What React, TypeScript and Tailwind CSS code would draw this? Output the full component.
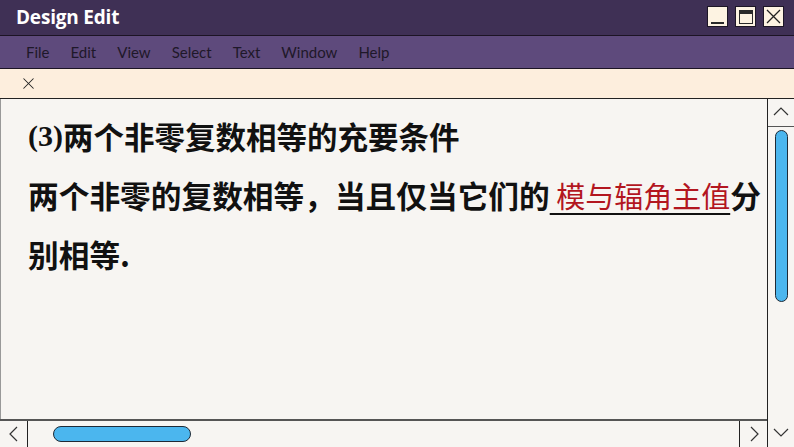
import { X } from "lucide-react";

const MENU = ["File", "Edit", "View", "Select", "Text", "Window", "Help"];

function WinButton({ kind }: { kind: "min" | "max" | "close" }) {
  return (
    <div className="w-[21px] h-[21px] bg-[#fdf3e2] border border-[#1d1626] flex items-center justify-center">
      {kind === "min" && <div className="w-[13px] h-[2px] bg-[#2a2a2a] mt-[12px]" />}
      {kind === "max" && (
        <div className="w-[14px] h-[14px] border border-[#2a2a2a] border-t-[4px]" />
      )}
      {kind === "close" && (
        <svg width="15" height="15" viewBox="0 0 15 15">
          <path d="M1 1L14 14M14 1L1 14" stroke="#222" strokeWidth="1.3" />
        </svg>
      )}
    </div>
  );
}

function Chevron({ dir }: { dir: "up" | "down" | "left" | "right" }) {
  const d = {
    up: "M2 11L9 4L16 11",
    down: "M2 5L9 12L16 5",
    left: "M12 2L5 9L12 16",
    right: "M6 2L13 9L6 16",
  }[dir];
  return (
    <svg width="18" height="18" viewBox="0 0 18 18">
      <path d={d} fill="none" stroke="#333" strokeWidth="1.2" />
    </svg>
  );
}

export default function App() {
  return (
    <div className="w-[794px] h-[447px] overflow-hidden flex flex-col bg-[#f7f5f2] font-['Lato',sans-serif]">
      {/* Title bar */}
      <div className="h-[36px] shrink-0 bg-[#3f3055] border-b border-[#1c1424] flex items-center justify-between pl-[16px] pr-[10px]">
        <span className="text-white font-bold text-[19px] font-['Open_Sans',sans-serif] tracking-[-0.2px]">
          Design Edit
        </span>
        <div className="flex items-center gap-[7px] mt-[-2px]">
          <WinButton kind="min" />
          <WinButton kind="max" />
          <WinButton kind="close" />
        </div>
      </div>

      {/* Menu bar */}
      <div className="h-[33px] shrink-0 bg-[#5e4a7c] border-b border-[#1c1424] flex items-center pl-[26px] gap-[21px] text-[15px] text-[#1e1829]">
        {MENU.map((m) => (
          <span key={m}>{m}</span>
        ))}
      </div>

      {/* Toolbar */}
      <div className="h-[30px] shrink-0 bg-[#fdeedd] border-b border-[#222] flex items-center pl-[19px]">
        <X size={19} strokeWidth={1.3} className="text-[#222]" />
      </div>

      {/* Body */}
      <div className="flex-1 flex min-h-0">
        <div className="flex-1 flex flex-col min-w-0">
          <div className="flex-1 border-l border-[#999] pl-[27px] pt-[17px] font-['Noto_Sans_CJK_SC',sans-serif] font-bold text-[#111]">
            <div className="h-[40px] flex items-center text-[30.5px] leading-none whitespace-nowrap">
              <span className="font-['Liberation_Serif',serif] text-[30px]">(3)</span>
              <span>两个非零复数相等的充要条件</span>
            </div>
            <div className="h-[60px] mt-[9px] flex items-center text-[30.7px] leading-none whitespace-nowrap">
              <span>两个非零的复数相等，当且仅当它们的</span>
              <span className="font-normal text-[#b3161f] underline decoration-[#111] decoration-[2px] underline-offset-[5px] text-[29px]">
                &nbsp;模与辐角主值
              </span>
              <span>分</span>
            </div>
            <div className="h-[58px] flex items-center text-[30.7px] leading-none">
              <span>别相等.</span>
            </div>
          </div>
          {/* Horizontal scrollbar */}
          <div className="h-[28px] shrink-0 border-t-2 border-[#555] flex">
            <div className="w-[28px] border-r border-[#222] flex items-center justify-center">
              <Chevron dir="left" />
            </div>
            <div className="flex-1 flex items-center pl-[25px]">
              <div className="w-[138px] h-[16px] rounded-full bg-[#4bb6ee] border border-[#1e2a36]" />
            </div>
            <div className="w-[28px] border-l border-[#222] flex items-center justify-center">
              <Chevron dir="right" />
            </div>
          </div>
        </div>

        {/* Vertical scrollbar */}
        <div className="w-[27px] shrink-0 border-l border-[#222] flex flex-col">
          <div className="h-[28px] border-b border-[#555] flex items-center justify-center">
            <Chevron dir="up" />
          </div>
          <div className="flex-1 flex justify-center pt-[3px]">
            <div className="w-[13px] h-[172px] rounded-full bg-[#4bb6ee] border border-[#1e2a36]" />
          </div>
          <div className="h-[28px] flex items-center justify-center">
            <Chevron dir="down" />
          </div>
        </div>
      </div>
    </div>
  );
}
